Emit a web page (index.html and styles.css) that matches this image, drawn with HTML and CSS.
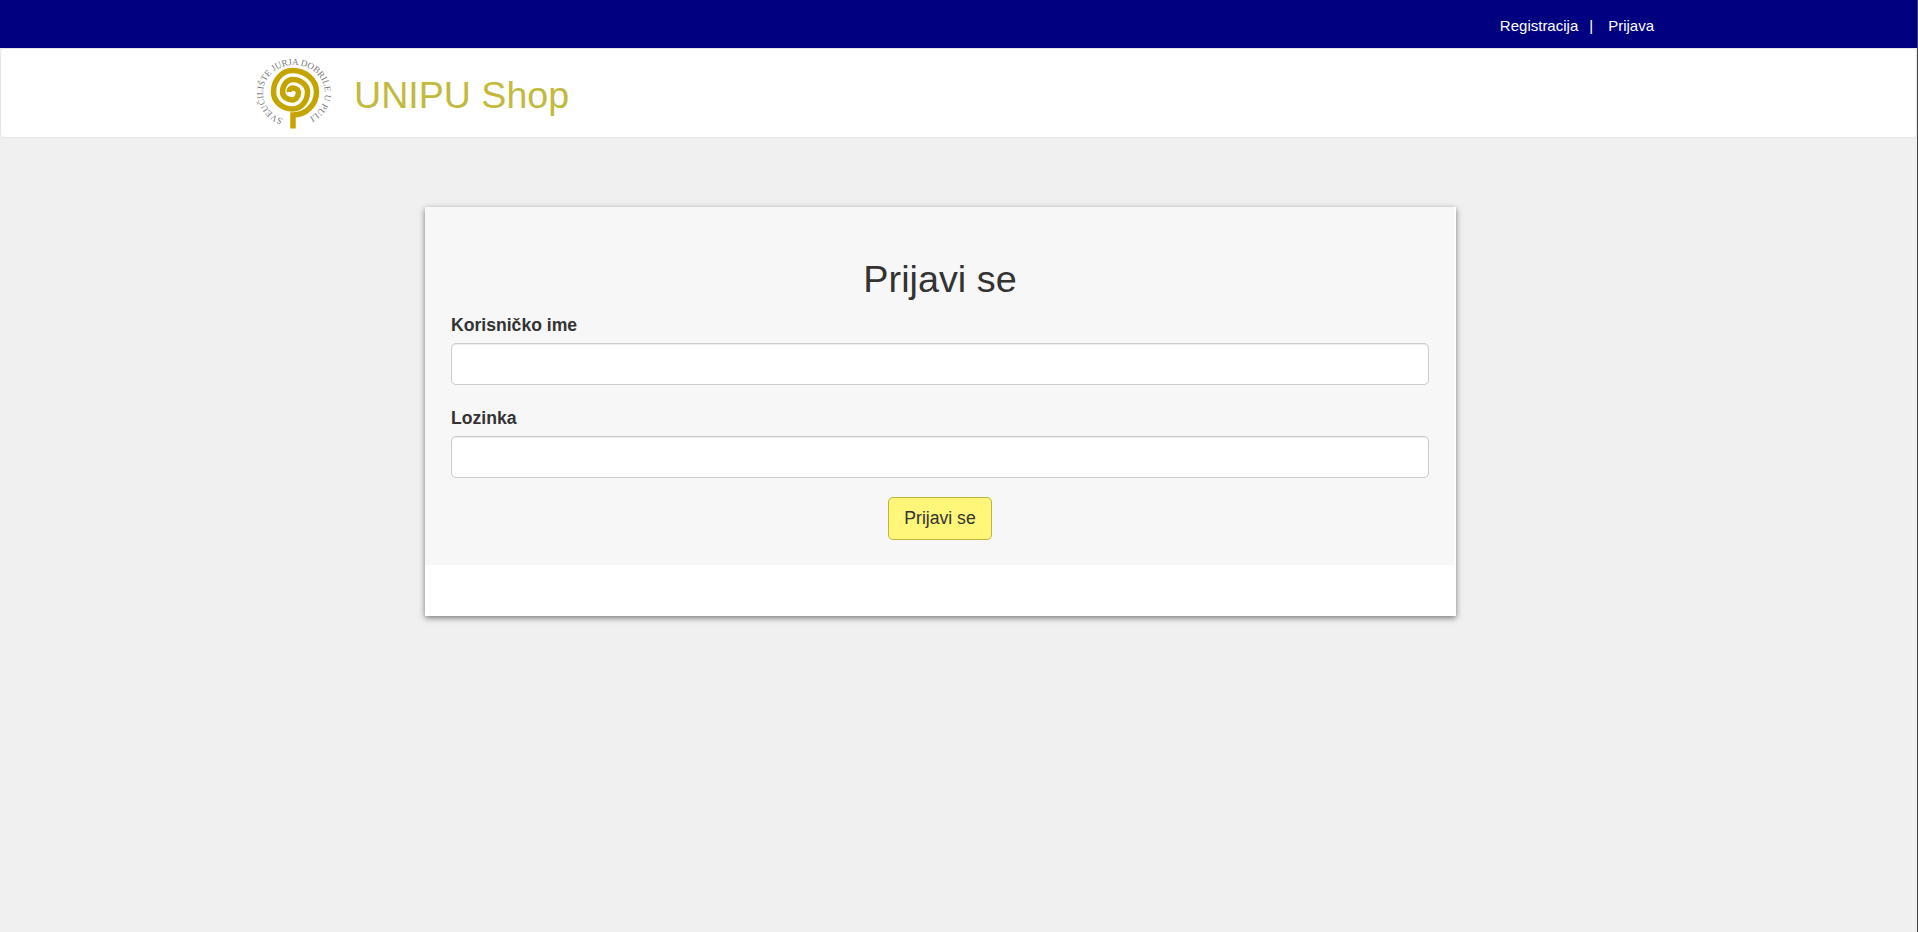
FILE: index.html
```html
<!DOCTYPE html>
<html lang="hr">
<head>
<meta charset="utf-8">
<title>UNIPU Shop</title>
<link rel="stylesheet" href="styles.css">
</head>
<body>
<div class="topbar">
  <a class="toplink" href="#">Registracija</a>
  <span class="sep">|</span>
  <a class="toplink" href="#">Prijava</a>
</div>
<header class="navbar">
  <svg class="logo" viewBox="0 0 80 80" width="80" height="80" aria-label="Logo">
    <defs><path id="ring" d="M30 66 A31 28 0 1 1 52 66"/></defs>
    <text class="logo-text"><textPath href="#ring" textLength="158">SVEUČILIŠTE JURJA DOBRILE U PULI</textPath></text>
    <path class="spiral" d="M40 75.500 V62 A23.500 23 0 0 0 63.500 39 A24 21.500 0 0 0 39.500 17.500 A19 21.500 0 0 0 20.500 39 A19 17 0 0 0 39.500 56 A15 17 0 0 0 54.500 39 A15 12.500 0 0 0 39.500 26.500 A10 12.500 0 0 0 29.500 39 A10 8 0 0 0 39.500 47 A6 8 0 0 0 45.500 39 A6 4 0 0 0 39.500 35 A3.500 4 0 0 0 36 39"/>
  </svg>
  <a class="brand" href="#">UNIPU Shop</a>
</header>
<main class="main">
  <section class="card">
    <form class="panel">
      <h2 class="title">Prijavi se</h2>
      <div class="group">
        <label class="label" for="user">Korisničko ime</label>
        <input class="input" id="user" type="text">
      </div>
      <div class="group">
        <label class="label" for="pass">Lozinka</label>
        <input class="input" id="pass" type="password">
      </div>
      <div class="actions"><button class="btn" type="button">Prijavi se</button></div>
    </form>
  </section>
</main>
</body>
</html>
```
FILE: styles.css
```css
* { box-sizing: border-box; }
html, body { height: 100%; }
body {
  margin: 0;
  background: #f0f0f0;
  border-right: 1px solid #444;
  font-family: "Liberation Sans", Arial, sans-serif;
  color: #333;
  overflow: hidden;
}
.topbar {
  height: 48px;
  background: #000080;
  display: flex;
  justify-content: flex-end;
  align-items: center;
  padding: 2px 263px 0 0;
  font-size: 15px;
  color: #fff;
}
.toplink { color: #fff; text-decoration: none; }
.sep { margin: 0 15px 0 11px; }
.navbar {
  height: 90px;
  background: #fff;
  border: 1px solid #e7e7e7;
  border-radius: 4px;
  display: flex;
  align-items: center;
  padding-left: 252px;
}
.logo { display: block; flex: none; }
.logo-text { font-family: "Liberation Serif", serif; font-size: 9px; fill: #777; }
.spiral { fill: none; stroke: #c4a500; stroke-width: 5.5; }
.brand {
  margin: 4px 0 0 21px;
  color: #c2ba3c;
  font-size: 37.6px;
  text-decoration: none;
}
.main { padding: 69px 0 0 425px; }
.card {
  width: 1031px;
  height: 409px;
  background: #fff;
  box-shadow: 0 2px 6px rgba(0,0,0,.5);
  padding-right: 2px;
}
.panel {
  height: 358px;
  background: #f7f7f7;
  padding: 51px 25px 0 26px;
}
.title {
  margin: 0 0 15px;
  text-align: center;
  font-size: 37.8px;
  font-weight: 400;
  line-height: 42px;
  color: #333;
}
.group { margin-bottom: 19px; }
.group + .group { padding-top: 4px; }
.label {
  display: block;
  font-size: 17.6px;
  font-weight: 700;
  line-height: 20px;
  margin-bottom: 8px;
  color: #333;
}
.input {
  display: block;
  width: 100%;
  height: 42px;
  background: #fff;
  border: 1px solid #ccc;
  border-radius: 5px;
  box-shadow: inset 0 1px 1px rgba(0,0,0,.075);
}
.actions { display: flex; justify-content: center; }
.btn {
  width: 104px;
  height: 43px;
  background: #fff67a;
  border: 1px solid #bdb63a;
  border-radius: 5px;
  font-family: inherit;
  font-size: 17.6px;
  color: #333;
  padding: 0;
}
```
